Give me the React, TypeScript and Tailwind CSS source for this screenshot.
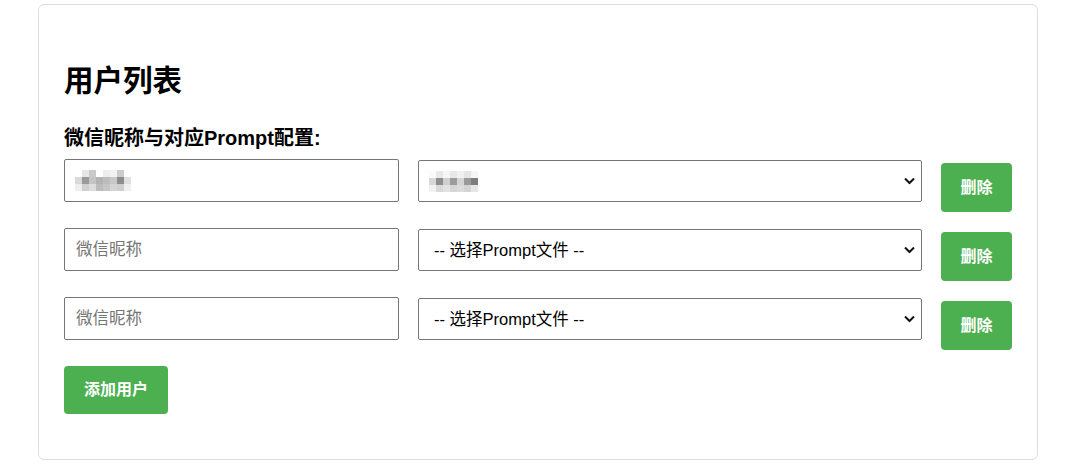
import { useState } from 'react';

type UserRow = { id: number; name: string; prompt: string; masked?: boolean };

const FONT = { fontFamily: '"Liberation Sans", Arial, "Noto Sans CJK SC", sans-serif' };

// grey blocks standing in for the pixelated (redacted) values
function Mosaic({ cells }: { cells: string[][] }) {
  return (
    <div className="pointer-events-none absolute left-[11px] top-[11px] flex flex-col">
      {cells.map((row, i) => (
        <div key={i} className="flex">
          {row.map((c, j) => (
            <div key={j} className="h-[7px] w-[7px]" style={{ backgroundColor: c }} />
          ))}
        </div>
      ))}
    </div>
  );
}

const nameCells = [
  ['#fff', '#e6e6e6', '#c9c9c9', '#fff', '#ededed', '#f2f2f2', '#ccc', '#fff'],
  ['#d9d9d9', '#9a9a9a', '#c4c4c4', '#b3b3b3', '#bdbdbd', '#c8c8c8', '#8c8c8c', '#e0e0e0'],
  ['#eee', '#d0d0d0', '#ddd', '#bcbcbc', '#c6c6c6', '#d4d4d4', '#cfcfcf', '#f0f0f0'],
];

const promptCells = [
  ['#fafafa', '#e8e8e8', '#f5f5f5', '#e8e8e8', '#f0f0f0', '#e5e5e5', '#f5f5f5'],
  ['#d8d8d8', '#8e8e8e', '#cfcfcf', '#9c9c9c', '#d4d4d4', '#999', '#7d7d7d'],
  ['#f2f2f2', '#d9d9d9', '#e2e2e2', '#d6d6d6', '#dcdcdc', '#d3d3d3', '#e6e6e6'],
];

function Chevron() {
  return (
    <svg
      className="pointer-events-none absolute right-[7px] top-1/2 -translate-y-1/2"
      width="11"
      height="7"
      viewBox="0 0 11 7"
      fill="none"
    >
      <path d="M1 1l4.5 4.5L10 1" stroke="#111" strokeWidth="2" />
    </svg>
  );
}

export default function App() {
  const [users, setUsers] = useState<UserRow[]>([
    { id: 1, name: '', prompt: '', masked: true },
    { id: 2, name: '', prompt: '' },
    { id: 3, name: '', prompt: '' },
  ]);

  const addUser = () => setUsers((u) => [...u, { id: Date.now(), name: '', prompt: '' }]);
  const removeUser = (id: number) => setUsers((u) => u.filter((x) => x.id !== id));

  return (
    <div className="min-h-[468px] bg-white pt-[4px] pl-[38px]" style={FONT}>
      <div className="w-[1000px] h-[456px] rounded-[6px] border border-[#dedede] px-[25px] pt-[25px]">
        <h2 className="mt-[34px] text-[29.5px] leading-[34px] font-bold text-black">用户列表</h2>

        <label className="mt-[28px] block text-[20px] leading-[24px] font-bold text-black">
          微信昵称与对应Prompt配置:
        </label>

        <div className="mt-[9px] flex flex-col">
          {users.map((u) => (
            <div key={u.id} className="flex h-[69px] items-start">
              <div className="relative">
                <input
                  className="h-[43px] w-[335px] rounded-[2px] border border-[#767676] px-[11px] text-[16.5px] text-black outline-none placeholder:text-[#757575]"
                  placeholder={u.masked ? '' : '微信昵称'}
                  value={u.name}
                  onChange={(e) =>
                    setUsers((all) => all.map((x) => (x.id === u.id ? { ...x, name: e.target.value } : x)))
                  }
                />
                {u.masked && <Mosaic cells={nameCells} />}
              </div>

              <div className="relative ml-[19px] mt-[1px]">
                <select
                  className="h-[42px] w-[504px] appearance-none rounded-[2px] border border-[#767676] bg-white pl-[15px] pr-[24px] text-[16.5px] text-black outline-none"
                  value={u.prompt}
                  onChange={(e) =>
                    setUsers((all) => all.map((x) => (x.id === u.id ? { ...x, prompt: e.target.value } : x)))
                  }
                >
                  <option value="">{u.masked ? '' : '-- 选择Prompt文件 --'}</option>
                  <option value="default.txt">default.txt</option>
                </select>
                {u.masked && <Mosaic cells={promptCells} />}
                <Chevron />
              </div>

              <button
                className="ml-[19px] mt-[4px] h-[49px] w-[71px] rounded-[4px] bg-[#4caf50] text-[16px] font-semibold text-white"
                onClick={() => removeUser(u.id)}
              >
                删除
              </button>
            </div>
          ))}
        </div>

        <button
          className="h-[48px] w-[104px] rounded-[4px] bg-[#4caf50] text-[16px] font-semibold text-white"
          onClick={addUser}
        >
          添加用户
        </button>
      </div>
    </div>
  );
}
